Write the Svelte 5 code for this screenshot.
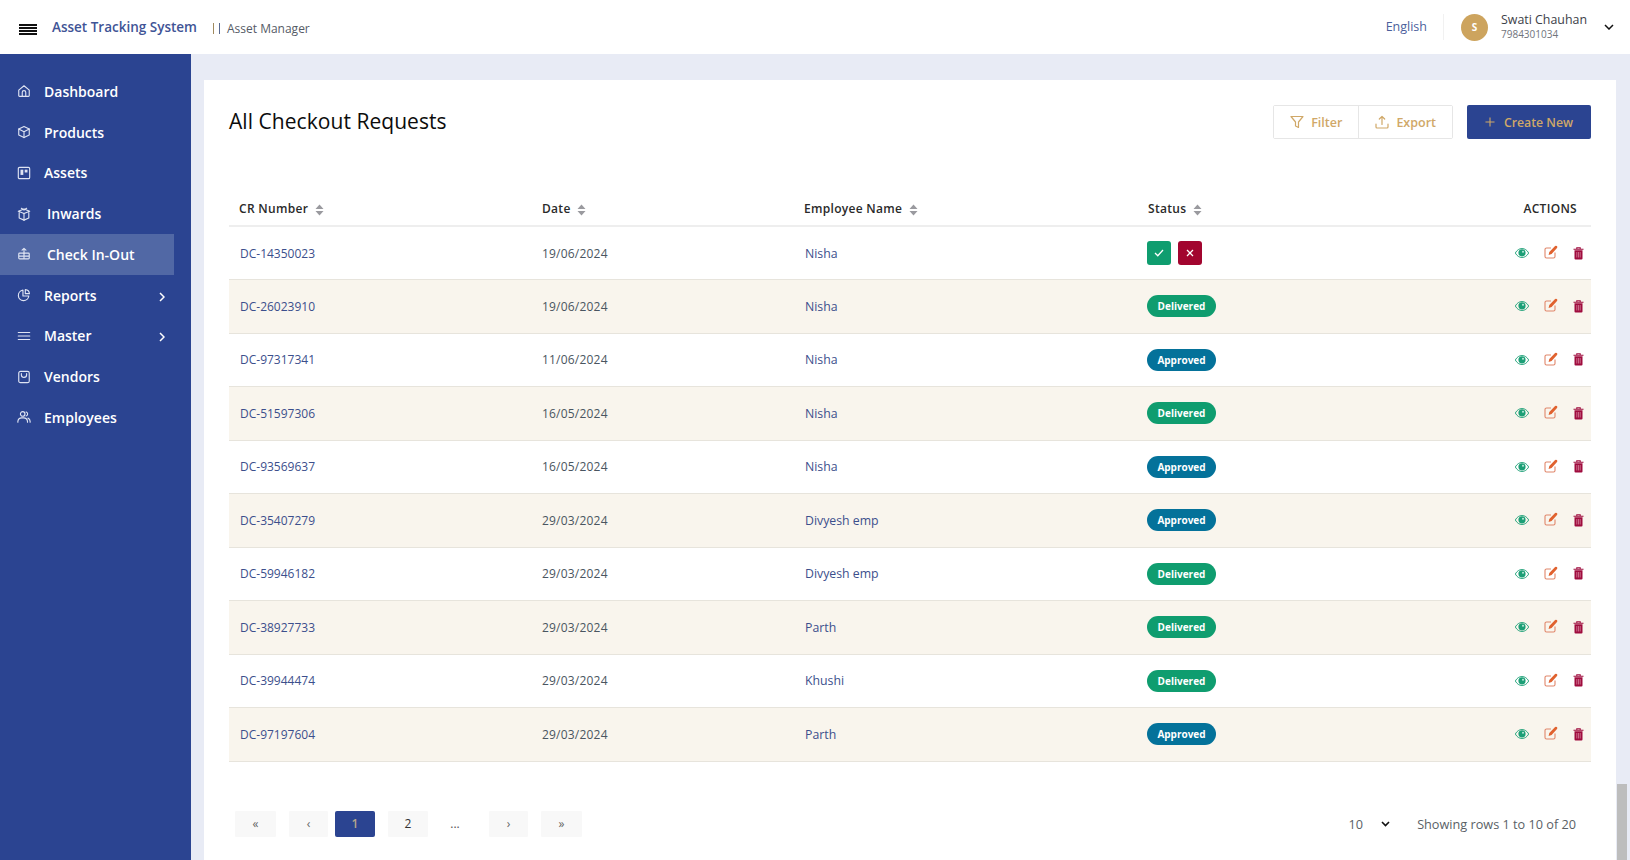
<script>
  const menu = [
    { label: "Dashboard", icon: "home" },
    { label: "Products", icon: "box" },
    { label: "Assets", icon: "assets" },
    { label: "Inwards", icon: "inwards", wide: true },
    { label: "Check In-Out", icon: "check", wide: true, active: true },
    { label: "Reports", icon: "pie", more: true },
    { label: "Master", icon: "lines", more: true },
    { label: "Vendors", icon: "bag" },
    { label: "Employees", icon: "users" },
  ];

  const rows = [
    { cr: "DC-14350023", date: "19/06/2024", name: "Nisha", status: "pending" },
    { cr: "DC-26023910", date: "19/06/2024", name: "Nisha", status: "Delivered" },
    { cr: "DC-97317341", date: "11/06/2024", name: "Nisha", status: "Approved" },
    { cr: "DC-51597306", date: "16/05/2024", name: "Nisha", status: "Delivered" },
    { cr: "DC-93569637", date: "16/05/2024", name: "Nisha", status: "Approved" },
    { cr: "DC-35407279", date: "29/03/2024", name: "Divyesh emp", status: "Approved" },
    { cr: "DC-59946182", date: "29/03/2024", name: "Divyesh emp", status: "Delivered" },
    { cr: "DC-38927733", date: "29/03/2024", name: "Parth", status: "Delivered" },
    { cr: "DC-39944474", date: "29/03/2024", name: "Khushi", status: "Delivered" },
    { cr: "DC-97197604", date: "29/03/2024", name: "Parth", status: "Approved" },
  ];
</script>

{#snippet sort()}
  <svg class="sort" width="9" height="12" viewBox="0 0 9 12"><path d="M4.5 0.5 8.5 5H0.5Z M0.5 7H8.5L4.5 11.5Z" fill="#9a9a9f" /></svg>
{/snippet}

{#snippet navIcon(name)}
  <svg class="nav-icon" width="14" height="14" viewBox="0 0 16 16" fill="none" stroke="#dfe4f3" stroke-width="1.3" stroke-linecap="round" stroke-linejoin="round">
    {#if name === "home"}
      <path d="M2 7 8 2l6 5v6.2a.9.9 0 0 1-.9.9H2.9a.9.9 0 0 1-.9-.9Z" /><path d="M6 14V9.500a2 2 0 0 1 4 0V14" />
    {:else if name === "box"}
      <path d="M8 1.600 14 4.600v6.800L8 14.400 2 11.400V4.600Z" /><path d="M2 4.600 8 7.800l6-3.200M8 7.800v6.600" />
    {:else if name === "assets"}
      <rect x="1.500" y="1.500" width="13" height="13" rx="1.500" /><rect x="4" y="4.200" width="3.200" height="6" fill="#dfe4f3" stroke="none" /><rect x="8.800" y="4.200" width="3.200" height="3.200" fill="#dfe4f3" stroke="none" />
    {:else if name === "inwards"}
      <path d="M2.500 6.500v6L8 15l5.500-2.500v-6" /><path d="M1.500 4.800 8 7.500l6.500-2.700L8 2.200Z" /><path d="M8 7.500V15M5 1.500 8 3.500l3-2" />
    {:else if name === "check"}
      <path d="M8 1.500v6M5.800 3.500 8 1.500l2.200 2" /><path d="M3 7h10a1 1 0 0 1 1 1v4.500a1 1 0 0 1-1 1H3a1 1 0 0 1-1-1V8a1 1 0 0 1 1-1ZM2 10.500h12M8 7.500v6" />
    {:else if name === "pie"}
      <path d="M6.800 2.500a6 6 0 1 0 6.700 6.700H6.800Z" /><path d="M9.500 1.800a5 5 0 0 1 4.700 4.700H9.500Z" />
    {:else if name === "lines"}
      <path d="M1.500 4h13M1.500 8h13M1.500 12h13" stroke-width="1.400" />
    {:else if name === "bag"}
      <rect x="2" y="1.500" width="12" height="13" rx="2" /><path d="M5 4v1.500a3 3 0 0 0 6 0V4" />
    {:else if name === "users"}
      <circle cx="6.500" cy="4.500" r="2.600" /><path d="M1 14v-1a4.500 4.500 0 0 1 4.500-4h2A4.500 4.500 0 0 1 12 13v1" /><path d="M10.500 2.200a2.500 2.500 0 0 1 0 4.700M12.500 9.300A4 4 0 0 1 15 13v1" />
    {/if}
  </svg>
{/snippet}

<div class="page">
  <header class="topbar">
    <div class="burger"><span></span><span></span><span></span><span></span></div>
    <span class="brand">Asset Tracking System</span>
    <span class="bars"><i></i><i></i></span>
    <span class="role">Asset Manager</span>
    <span class="lang">English</span>
    <span class="avatar">S</span>
    <div class="who">
      <div class="who-name">Swati Chauhan</div>
      <div class="who-phone">7984301034</div>
    </div>
    <svg class="caret" width="10" height="6" viewBox="0 0 10 6" fill="none" stroke="#111" stroke-width="1.500"><path d="M1 1l4 4 4-4" /></svg>
  </header>

  <div class="body">
    <aside class="sidebar">
      {#each menu as item}
        <div class="nav-item" class:active={item.active} class:wide={item.wide}>
          {@render navIcon(item.icon)}
          <span class="nav-label">{item.label}</span>
          {#if item.more}
            <svg class="nav-more" width="6" height="10" viewBox="0 0 6 10" fill="none" stroke="#fff" stroke-width="1.500"><path d="M1 1l4 4-4 4" /></svg>
          {/if}
        </div>
      {/each}
    </aside>

    <main class="content">
      <section class="card">
        <div class="card-head">
          <h1>All Checkout Requests</h1>
          <div class="tools">
            <div class="tool-group">
              <button class="tool">
                <svg width="14" height="14" viewBox="0 0 14 14" fill="none" stroke="#d0a868" stroke-width="1.200" stroke-linejoin="round"><path d="M1 1.500h12L8.500 7v5.500l-3-1.500V7Z" /></svg>
                Filter
              </button>
              <button class="tool">
                <svg width="14" height="14" viewBox="0 0 14 14" fill="none" stroke="#d0a868" stroke-width="1.200" stroke-linecap="round" stroke-linejoin="round"><path d="M7 9.500V1.500M4.300 4 7 1.500 9.700 4M1 9v3a1 1 0 0 0 1 1h10a1 1 0 0 0 1-1V9" /></svg>
                Export
              </button>
            </div>
            <button class="create">
              <svg width="10" height="10" viewBox="0 0 11 11" stroke="#d0a868" stroke-width="1.200"><path d="M5.500 0.500v10M0.500 5.500h10" /></svg>
              Create New
            </button>
          </div>
        </div>

        <table>
          <colgroup>
            <col class="c1" /><col class="c2" /><col class="c3" /><col class="c4" /><col />
          </colgroup>
          <thead>
            <tr>
              <th>CR Number {@render sort()}</th>
              <th>Date {@render sort()}</th>
              <th>Employee Name {@render sort()}</th>
              <th>Status {@render sort()}</th>
              <th class="right">ACTIONS</th>
            </tr>
          </thead>
          <tbody>
            {#each rows as row, i}
              <tr class:odd={i % 2 === 1}>
                <td class="cr">{row.cr}</td>
                <td class="date">{row.date}</td>
                <td class="name">{row.name}</td>
                <td class="state">
                  {#if row.status === "pending"}
                    <div class="decide">
                      <span class="square ok">
                        <svg width="10" height="8" viewBox="0 0 10 8" fill="none" stroke="#fff" stroke-width="1.300"><path d="M1 4l2.800 2.800L9 1" /></svg>
                      </span>
                      <span class="square no">
                        <svg width="8" height="8" viewBox="0 0 8 8" fill="none" stroke="#fff" stroke-width="1.300"><path d="M1 1l6 6M7 1 1 7" /></svg>
                      </span>
                    </div>
                  {:else}
                    <span class="pill" class:approved={row.status === "Approved"}>{row.status}</span>
                  {/if}
                </td>
                <td class="act-cell">
                  <div class="acts">
                    <svg width="14" height="10" viewBox="0 0 14 10"><path d="M0.300 5C2 2 4.300 0.500 7 0.500S12 2 13.700 5C12 8 9.700 9.500 7 9.500S2 8 0.300 5Z" fill="none" stroke="#1c9f76" stroke-width="0.900" /><circle cx="7" cy="4.800" r="3.600" fill="#1c9f76" /><circle cx="8" cy="3.700" r="1" fill="#bfe8da" /></svg>
                    <svg class="edit" width="14" height="14" viewBox="0 0 14 14" fill="none"><path d="M11 7.500v4a1.500 1.500 0 0 1-1.500 1.500h-7A1.500 1.500 0 0 1 1 11.500v-7A1.500 1.500 0 0 1 2.500 3H7" stroke="#e0866a" stroke-width="1.100" /><path d="M4.600 9.900l.7-3 5.800-5.800a1.200 1.200 0 0 1 1.700 0l.2.200a1.200 1.200 0 0 1 0 1.700L7.600 9.100Z" fill="#e0622f" /></svg>
                    <svg width="11" height="13" viewBox="0 0 11 13"><path d="M0.500 2.300h10M3.800 2V.8h3.400V2" fill="none" stroke="#9f0c3e" stroke-width="1.100" /><path d="M1.500 3.200h8v8.300a1 1 0 0 1-1 1h-6a1 1 0 0 1-1-1Z" fill="#9f0c3e" /><path d="M3.800 5v5.500M5.500 5v5.500M7.200 5v5.500" stroke="#e7a8ba" stroke-width="0.600" /></svg>
                  </div>
                </td>
              </tr>
            {/each}
          </tbody>
        </table>

        <div class="foot">
          <div class="pager">
            <span class="pg p-end">«</span>
            <span class="pg p-arrow">‹</span>
            <span class="pg p-num current">1</span>
            <span class="pg p-num two">2</span>
            <span class="dots">...</span>
            <span class="pg p-arrow">›</span>
            <span class="pg p-end">»</span>
          </div>
          <div class="rows-info">
            <span class="size">10</span>
            <svg width="9" height="6" viewBox="0 0 9 6" fill="none" stroke="#111" stroke-width="1.600"><path d="M1 1l3.500 3.500L8 1" /></svg>
            <span class="showing">Showing rows 1 to 10 of 20</span>
          </div>
        </div>
      </section>
      <div class="scroll-thumb"></div>
    </main>
  </div>
</div>

<style>
  :global(body) {
    margin: 0;
    overflow: hidden;
    font-family: "Open Sans", "Liberation Sans", sans-serif;
  }

  .page {
    width: 1630px;
    height: 860px;
    overflow: hidden;
    display: flex;
    flex-direction: column;
  }

  .topbar {
    height: 54px;
    flex: none;
    display: flex;
    align-items: center;
    background: #fff;
    padding-left: 19px;
    box-sizing: border-box;
  }

  .burger {
    width: 18px;
    display: flex;
    flex-direction: column;
    gap: 1.600px;
    margin-top: 5px;
  }

  .burger span {
    height: 1.500px;
    background: #111;
  }

  .brand {
    margin-left: 15px;
    font-size: 13.500px;
    font-weight: 600;
    color: #3f5496;
    margin-top: -1px;
  }

  .bars {
    display: flex;
    gap: 5px;
    margin-left: 16px;
    margin-top: 2px;
  }

  .bars i {
    width: 1px;
    height: 11px;
    background: #a08a5e;
  }

  .bars i + i {
    background: #5a6a90;
  }

  .role {
    margin-left: 7px;
    font-size: 12px;
    color: #555b66;
    margin-top: 2px;
  }

  .lang {
    margin-left: auto;
    font-size: 12.500px;
    color: #4b5f9c;
    margin-top: -1px;
    padding-right: 16px;
    border-right: 1px solid #f1f1f1;
    line-height: 26px;
  }

  .avatar {
    width: 27px;
    height: 27px;
    border-radius: 50%;
    background: #cda45e;
    color: #fff;
    font-size: 10px;
    font-weight: 700;
    display: flex;
    align-items: center;
    justify-content: center;
    margin-left: 17px;
  }

  .who {
    margin-left: 13px;
    width: 103px;
    margin-top: -2px;
  }

  .who-name {
    font-size: 12.400px;
    line-height: 16px;
    color: #3c4048;
  }

  .who-phone {
    font-size: 10px;
    line-height: 12px;
    color: #70747c;
  }

  .caret {
    margin-right: 16px;
  }

  .body {
    flex: 1;
    display: flex;
    min-height: 0;
  }

  .sidebar {
    width: 191px;
    flex: none;
    background: #2b4491;
    padding-top: 17px;
    box-sizing: border-box;
  }

  .nav-item {
    width: 174px;
    height: 40.750px;
    display: flex;
    align-items: center;
    padding-left: 17px;
    box-sizing: border-box;
    color: #fff;
    font-size: 14px;
    font-weight: 600;
    position: relative;
  }

  .nav-item.active {
    background: #5168a5;
  }

  .nav-icon {
    flex: none;
  }

  .nav-label {
    margin-left: 13px;
  }

  .wide .nav-label {
    margin-left: 16px;
  }

  .nav-more {
    margin-left: auto;
    margin-right: 9px;
    margin-top: 3px;
  }

  .content {
    flex: 1;
    background: #e8ebf5;
    padding: 26px 14px 0 13px;
    position: relative;
    min-width: 0;
  }

  .card {
    background: #fff;
    height: 800px;
    padding: 25px 25px 0 25px;
    box-sizing: border-box;
  }

  .card-head {
    display: flex;
    align-items: center;
    justify-content: space-between;
    height: 34px;
    margin-bottom: 37px;
  }

  h1 {
    margin: -2px 0 0;
    font-size: 21px;
    font-weight: 500;
    letter-spacing: 0.050px;
    color: #0c0c0c;
  }

  .tools {
    display: flex;
    gap: 14px;
  }

  .tool-group {
    display: flex;
    border: 1px solid #e6e6e6;
    border-radius: 2px;
  }

  .tool, .create {
    font-family: inherit;
    font-size: 12.500px;
    font-weight: 600;
    color: #d0a868;
    display: flex;
    align-items: center;
    gap: 7px;
    cursor: pointer;
  }

  .tool {
    height: 32px;
    background: #fff;
    border: 0;
    padding: 0 16px;
  }

  .tool + .tool {
    border-left: 1px solid #e6e6e6;
  }

  .create {
    height: 34px;
    width: 124px;
    justify-content: center;
    gap: 9px;
    background: #2b4491;
    border: 0;
    border-radius: 2px;
    font-size: 12.300px;
  }

  table {
    width: 100%;
    border-collapse: collapse;
    table-layout: fixed;
  }

  .c1 { width: 302px; }
  .c2 { width: 262px; }
  .c3 { width: 344px; }
  .c4 { width: 300px; }

  th {
    height: 50px;
    text-align: left;
    vertical-align: bottom;
    font-size: 12px;
    font-weight: 600;
    letter-spacing: 0.300px;
    color: #2a2a2a;
    padding: 0 11px 8px 11px;
    border-bottom: 2px solid #eeeeee;
    box-sizing: border-box;
  }

  th:first-child {
    padding-left: 10px;
  }

  th.right {
    text-align: right;
    padding-right: 14px;
  }

  .sort {
    margin-left: 3px;
    vertical-align: -3px;
  }

  td {
    height: 53.500px;
    padding: 0 11px;
    font-size: 12px;
    color: #4a5560;
    border-bottom: 1px solid #e7e4dc;
    box-sizing: border-box;
  }

  tr.odd td {
    background: #f9f5ed;
  }

  .cr {
    color: #3c4f8c;
    font-weight: 500;
  }

  .name {
    color: #3c4f8c;
    font-size: 12.300px;
    font-weight: 500;
    padding-left: 12px;
  }

  .date {
    letter-spacing: 0.200px;
  }

  .state {
    padding-left: 10px;
  }

  .act-cell {
    padding-right: 7px;
  }

  .decide {
    display: flex;
    gap: 7px;
  }

  .square {
    width: 24px;
    height: 24px;
    border-radius: 3px;
    display: flex;
    align-items: center;
    justify-content: center;
  }

  .ok { background: #0f9d6f; }
  .no { background: #a2052f; }

  .pill {
    display: inline-block;
    width: 69px;
    height: 22px;
    line-height: 22px;
    border-radius: 11px;
    background: #0f9d6f;
    color: #fff;
    font-size: 10px;
    font-weight: 700;
    text-align: center;
  }

  .pill.approved {
    background: #04729a;
  }

  .acts {
    display: flex;
    align-items: center;
    justify-content: flex-end;
    gap: 15px;
  }

  .edit {
    margin-top: -2px;
  }

  .foot {
    display: flex;
    align-items: center;
    justify-content: space-between;
    margin-top: 49px;
    padding: 0 15px 0 6px;
  }

  .pager {
    display: flex;
    align-items: center;
    gap: 13px;
  }

  .pg {
    height: 26px;
    line-height: 25px;
    background: #f8f8f8;
    text-align: center;
    font-size: 12px;
    color: #666;
    border-radius: 1px;
  }

  .p-end { width: 41px; }
  .p-arrow { width: 39px; }
  .p-num { width: 40px; margin-left: -6px; }
  .two { margin-left: 0; color: #333; }
  .current {
    background: #2b4491;
    color: #b3a68c;
    font-weight: 600;
    border-radius: 2px;
  }

  .dots {
    width: 28px;
    text-align: center;
    font-size: 12px;
    color: #555;
    margin-right: 7px;
  }

  .rows-info {
    display: flex;
    align-items: center;
    font-size: 12.700px;
    color: #5a5f66;
  }

  .size {
    margin-right: 18px;
  }

  .showing {
    margin-left: 27px;
  }

  .scroll-thumb {
    position: absolute;
    right: 3px;
    bottom: 0;
    width: 10px;
    height: 76px;
    background: #bdbdbd;
  }
</style>
